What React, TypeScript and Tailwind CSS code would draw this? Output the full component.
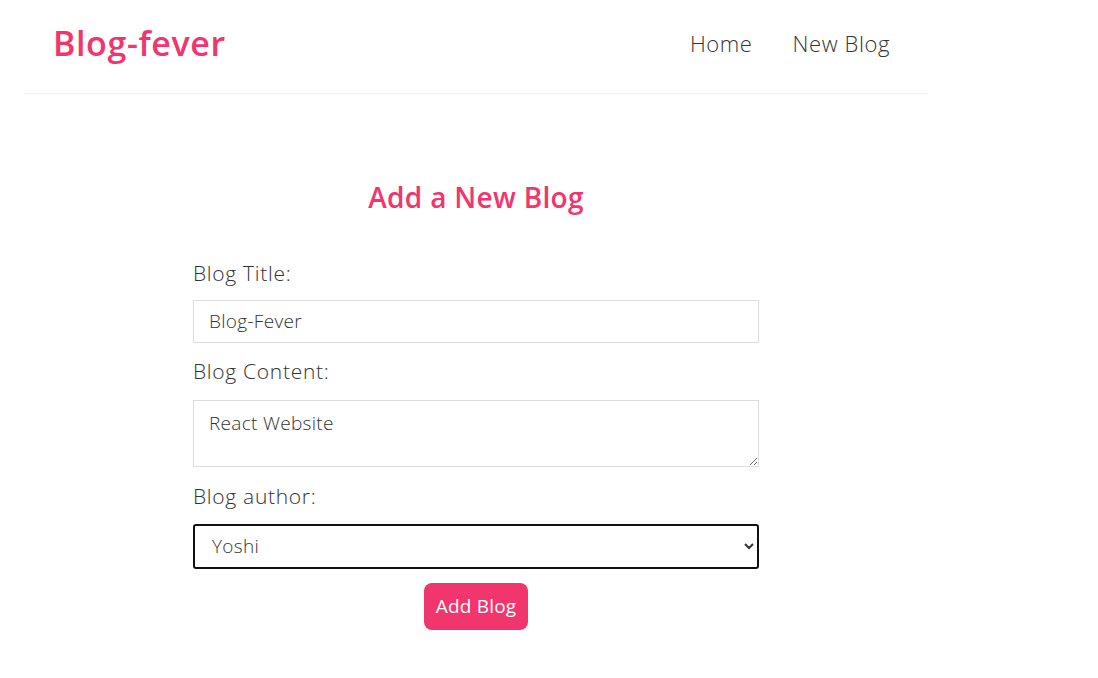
import { useState } from 'react';

const font = { fontFamily: '"Open Sans", "Noto Sans", sans-serif' };

function Navbar() {
  return (
    <nav className="flex h-[94px] items-center justify-between border-b border-[#f2f2f2] pb-[6px] pl-[29px] pr-[38px]">
      <h1 className="text-[34px] font-semibold tracking-[0.6px] text-[#f1356d]">Blog-fever</h1>
      <div className="flex gap-[40px] text-[22px] font-light tracking-[0.6px] text-[#333]">
        <a href="#">Home</a>
        <a href="#">New Blog</a>
      </div>
    </nav>
  );
}

function CreateForm() {
  const [title, setTitle] = useState('Blog-Fever');
  const [body, setBody] = useState('React Website');
  const [author, setAuthor] = useState('yoshi');

  return (
    <div className="mx-auto w-[566px] pt-[82px] text-center">
      <h2 className="text-[28px] font-semibold tracking-[0.3px] text-[#f1356d]">Add a New Blog</h2>
      <form className="mt-[40px] flex flex-col text-left" onSubmit={(e) => e.preventDefault()}>
        <label className="text-[21px] font-light tracking-[0.7px] text-[#333]">Blog Title:</label>
        <input
          className="mt-[10px] h-[43px] border border-[#ddd] px-[15px] text-[19px] font-light tracking-[0.3px] text-[#333] outline-none"
          value={title}
          onChange={(e) => setTitle(e.target.value)}
        />
        <label className="mt-[13px] text-[21px] font-light tracking-[0.7px] text-[#333]">Blog Content:</label>
        <textarea
          className="mt-[13px] h-[67px] border border-[#ddd] px-[15px] py-[8px] text-[19px] font-light tracking-[0.3px] text-[#333] outline-none"
          value={body}
          onChange={(e) => setBody(e.target.value)}
        />
        <label className="mt-[14px] text-[21px] font-light tracking-[0.7px] text-[#333]">Blog author:</label>
        <select
          className="mt-[11px] h-[45px] rounded-[3px] border-2 border-[#111] px-[13px] text-[19px] font-light tracking-[0.3px] text-[#333] outline-none"
          value={author}
          onChange={(e) => setAuthor(e.target.value)}
        >
          <option value="mario">Mario</option>
          <option value="yoshi">Yoshi</option>
        </select>
        <button className="mx-auto mt-[14px] h-[47px] rounded-[8px] bg-[#f1356d] px-[12px] text-[19px] tracking-[0.2px] text-white">
          Add Blog
        </button>
      </form>
    </div>
  );
}

export default function App() {
  return (
    <div className="min-h-[678px] bg-white" style={font}>
      <div className="ml-[24px] w-[904px]">
        <Navbar />
        <CreateForm />
      </div>
    </div>
  );
}
